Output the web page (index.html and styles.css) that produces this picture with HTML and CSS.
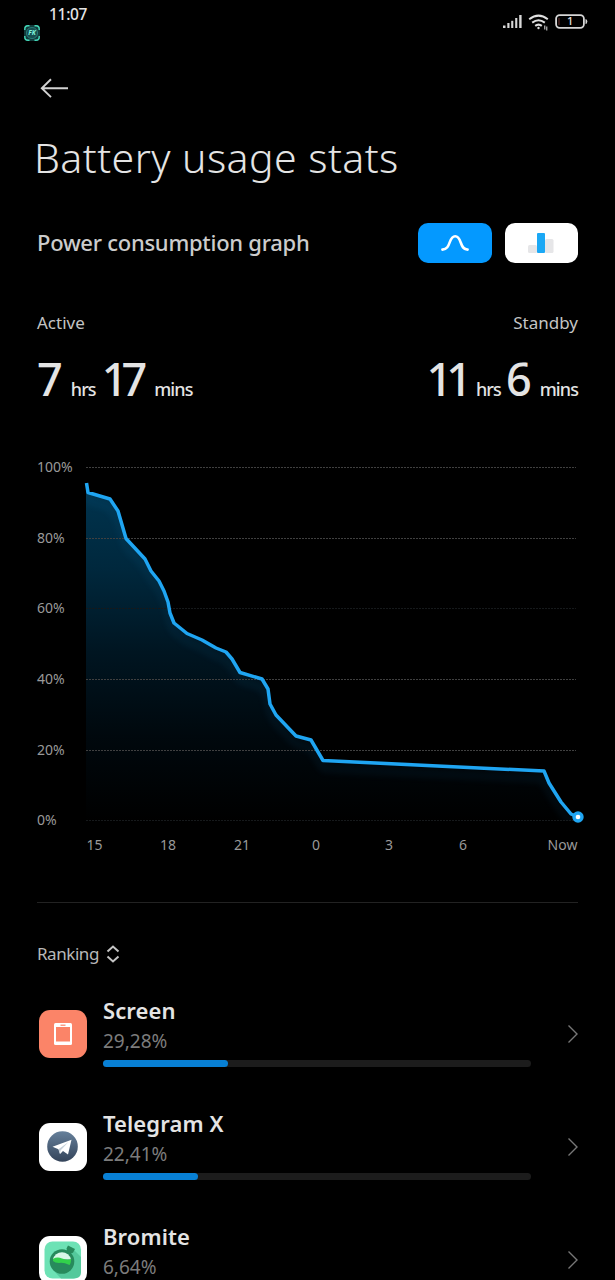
FILE: index.html
```html
<!DOCTYPE html>
<html lang="en">
<head>
<meta charset="UTF-8">
<meta name="viewport" content="width=device-width, initial-scale=1.0">
<title>Battery usage stats</title>
<link rel="stylesheet" href="styles.css">
</head>
<body>
<div class="status-bar">
  <svg class="app-badge" width="18" height="18" viewBox="0 0 18 18">
    <rect x="1" y="1" width="16" height="16" rx="4" fill="#123c3c"/>
    <path d="M1.800 6V5Q1.800 1.800 5 1.800H6.500M11.500 1.800H13Q16.200 1.800 16.200 5V6M16.200 12V13Q16.200 16.200 13 16.200H11.500M6.500 16.200H5Q1.800 16.200 1.800 13V12" fill="none" stroke="#45d8b8" stroke-width="1.400"/>
    <circle cx="9" cy="9" r="5.6" fill="#174f50" stroke="#2c8580" stroke-width=".8"/>
    <text x="9" y="11.2" text-anchor="middle" class="badge-text">FK</text>
  </svg>
  <span class="time">11:07</span>
  <div class="status-icons">
    <svg width="20" height="16" viewBox="0 0 20 16" fill="#d8d8d8">
      <rect x="0" y="11.5" width="2.5" height="2.5"/>
      <rect x="4.3" y="9" width="2.2" height="5"/>
      <rect x="8.2" y="6.8" width="2.1" height="7.2"/>
      <rect x="12.2" y="4" width="2.1" height="10"/>
      <rect x="16.2" y="1" width="2.4" height="13"/>
    </svg>
    <svg width="22" height="17" viewBox="0 0 22 17" fill="none" stroke="#e0e0e0" stroke-width="2">
      <path d="M1.2 5.2Q10.5 -2 19.8 5.2"/>
      <path d="M4.2 8.6Q10.5 3.8 16.8 8.6"/>
      <path d="M7.2 11.9Q10.5 9.3 13.8 11.9"/>
      <circle cx="10.5" cy="14" r="1.2" fill="#e0e0e0" stroke="none"/>
      <path d="M16.8 11.5v4M18.8 12.5v4" stroke-width="1"/>
    </svg>
    <svg width="34" height="16" viewBox="0 0 34 16">
      <rect x="1.1" y="1.1" width="27.8" height="12.8" rx="3.6" fill="none" stroke="#d6d6d6" stroke-width="1.8"/>
      <rect x="3.5" y="4" width="1" height="7" fill="#6b302c"/>
      <path d="M30.5 5v5q1.8 0 1.8-2.5T30.5 5z" fill="#d6d6d6"/>
      <text x="15.2" y="11.4" text-anchor="middle" class="battery-text">1</text>
    </svg>
  </div>
</div>

<div class="nav">
  <svg width="30" height="22" viewBox="0 0 30 22" fill="none" stroke="#d2d2d2" stroke-width="1.9">
    <path d="M28 11.2H1.8M11 2.3L1.8 11.2L11 20.1"/>
  </svg>
</div>

<h1 class="title">Battery usage stats</h1>

<div class="graph-header">
  <h2>Power consumption graph</h2>
  <div class="toggle">
    <button class="toggle-btn active">
      <svg width="30" height="20" viewBox="0 0 30 20" fill="none" stroke="#fff" stroke-width="2.6" stroke-linecap="round">
        <path d="M2.4 16.6C11.2 16.6 8.2 3.3 15.2 3.3S19.2 16.6 27.6 16.6"/>
      </svg>
    </button>
    <button class="toggle-btn">
      <svg width="28" height="22" viewBox="0 0 28 22">
        <rect x="1" y="13" width="9" height="8" rx="1.5" fill="#e6e6e8"/>
        <rect x="18" y="7" width="8.5" height="14" rx="1.5" fill="#e6e6e8"/>
        <rect x="10" y="1" width="8" height="20" rx="1" fill="#1ba8f5"/>
      </svg>
    </button>
  </div>
</div>

<div class="usage">
  <div class="usage-col">
    <div class="usage-label">Active</div>
    <div class="usage-value"><b>7</b><span class="hrs">hrs</span><b>17</b><span class="mins">mins</span></div>
  </div>
  <div class="usage-col right">
    <div class="usage-label">Standby</div>
    <div class="usage-value"><b>11</b><span class="hrs">hrs</span><b>6</b><span class="mins">mins</span></div>
  </div>
</div>

<svg class="chart" width="615" height="430" viewBox="0 440 615 430">
  <defs>
    <linearGradient id="fill" x1="0" y1="484" x2="0" y2="821" gradientUnits="userSpaceOnUse">
      <stop offset="0" stop-color="#00344f"/>
      <stop offset=".25" stop-color="#00283d"/>
      <stop offset=".5" stop-color="#001521"/>
      <stop offset=".75" stop-color="#00080d"/>
      <stop offset="1" stop-color="#000"/>
    </linearGradient>
    <clipPath id="area">
      <path d="M86 484L88 492.500L110 499L118 511L126 538.500L145 559L151 571L159 581L164 591L168 602L170 613L174 623L187 633.500L202 640L216 648L226 652L232 659L240 672.500L262 679L268 689L270 704L276 715L296 736L311 740L323 760.500L544 771L549 783L561 802L571 814L578 817L578 821H86z"/>
    </clipPath>
    <filter id="soft" x="-10%" y="-10%" width="120%" height="130%">
      <feGaussianBlur stdDeviation="4"/>
    </filter>
  </defs>
  <rect x="86" y="480" width="492" height="341" fill="url(#fill)" clip-path="url(#area)"/>
  <g clip-path="url(#area)">
    <use href="#line" class="glow" transform="translate(0 8)" filter="url(#soft)"/>
  </g>
  <g class="grid">
    <path d="M86 467.500H576"/>
    <path d="M86 538.500H576"/>
    <path d="M86 608.500H576" class="dim"/>
    <path d="M86 679.500H576"/>
    <path d="M86 750.500H576"/>
    <path d="M86 820.500H576" class="dim"/>
  </g>
  <path id="line" d="M86.500 483L88 492.500L110 499L118 511L126 538.500L145 559L151 571L159 581L164 591L168 602L170 613L174 623L187 633.500L202 640L216 648L226 652L232 659L240 672.500L262 679L268 689L270 704L276 715L296 736L311 740L323 760.500L544 771L549 783L561 802L571 814L578 817" fill="none" stroke="#1fa5f2" stroke-width="3.500" stroke-linejoin="round"/>
  <circle cx="578" cy="817" r="5.700" fill="#1fa5f2"/>
  <circle cx="578" cy="817" r="2.300" fill="#fff"/>
  <g class="axis">
    <text x="37" y="472">100%</text>
    <text x="37" y="543">80%</text>
    <text x="37" y="613">60%</text>
    <text x="37" y="684">40%</text>
    <text x="37" y="755">20%</text>
    <text x="37" y="825">0%</text>
  </g>
  <g class="axis hours">
    <text x="94.500" y="850">15</text>
    <text x="168" y="850">18</text>
    <text x="242" y="850">21</text>
    <text x="316" y="850">0</text>
    <text x="389" y="850">3</text>
    <text x="463" y="850">6</text>
    <text x="562.500" y="850">Now</text>
  </g>
</svg>

<div class="ranking-header">
  <span>Ranking</span>
  <svg width="14" height="18" viewBox="0 0 14 18" fill="none" stroke="#c4c4c4" stroke-width="2">
    <path d="M1.500 6.500L7 1.500L12.500 6.500M1.500 11.500L7 16.500L12.500 11.500"/>
  </svg>
</div>

<div class="ranking">
  <div class="item">
    <svg class="app-icon" width="48" height="48" viewBox="0 0 48 48">
      <rect width="48" height="48" rx="11" fill="#fb8468"/>
      <rect x="15" y="13" width="18" height="22" rx="1.500" fill="#fff"/>
      <rect x="17" y="17" width="14" height="14.500" fill="#fb8468"/>
      <path d="M21.500 15.200h5" stroke="#fb8468" stroke-width="1.200"/>
    </svg>
    <div class="info">
      <div class="name">Screen</div>
      <div class="percent">29,28%</div>
      <div class="bar"><div class="bar-fill" style="width: 29.28%"></div></div>
    </div>
    <svg class="chevron" width="12" height="20" viewBox="0 0 12 20"><path d="M1.500 1.500L10 10L1.500 18.500"/></svg>
  </div>
  <div class="item">
    <svg class="app-icon" width="48" height="48" viewBox="0 0 48 48">
      <defs>
        <linearGradient id="tg" x1="0" y1="0" x2="0" y2="1">
          <stop offset="0" stop-color="#66809b"/>
          <stop offset="1" stop-color="#34445a"/>
        </linearGradient>
      </defs>
      <rect width="48" height="48" rx="11" fill="#fff"/>
      <circle cx="23.500" cy="23.500" r="15.300" fill="url(#tg)"/>
      <path d="M13.500 23.800L32.500 16.800L29 31.500L24 28L21 31L19.500 26.200z" fill="#fff"/>
      <path d="M19.500 26.200L29.500 19L21.500 27.500L21 31z" fill="#c5d0da"/>
    </svg>
    <div class="info">
      <div class="name">Telegram X</div>
      <div class="percent">22,41%</div>
      <div class="bar"><div class="bar-fill" style="width: 22.200%"></div></div>
    </div>
    <svg class="chevron" width="12" height="20" viewBox="0 0 12 20"><path d="M1.500 1.500L10 10L1.500 18.500"/></svg>
  </div>
  <div class="item">
    <svg class="app-icon" width="48" height="48" viewBox="0 0 48 48">
      <rect width="48" height="48" rx="11" fill="#fff"/>
      <rect x="5.500" y="5.500" width="36.500" height="37" rx="8" fill="#6de2b5"/>
      <path d="M34 13L42 21V36Q42 42.500 35 42.500H22L15 35z" fill="#54c99c"/>
      <path d="M27.500 12.500L29 9.500L36 13L34 16.800L31.500 17.500L28 15z" fill="#278a5c"/>
      <circle cx="23" cy="25.500" r="12.300" fill="#278a5c"/>
      <path d="M14 23.500A9.200 9.200 0 0 1 32 23.500z" fill="#d9f7e8"/>
      <path d="M14 23Q18 20.500 23 22.500T32.200 23Q32 27 30.500 29Q24 26 20 27Q16 27 14 25z" fill="#32d14b"/>
    </svg>
    <div class="info">
      <div class="name">Bromite</div>
      <div class="percent">6,64%</div>
      <div class="bar"><div class="bar-fill" style="width: 6.64%"></div></div>
    </div>
    <svg class="chevron" width="12" height="20" viewBox="0 0 12 20"><path d="M1.500 1.500L10 10L1.500 18.500"/></svg>
  </div>
</div>
</body>
</html>
```

FILE: styles.css
```css
* {
  box-sizing: border-box;
}

body {
  margin: 0;
  height: 1280px;
  overflow: hidden;
  background-color: #000;
  color: #e4e4e4;
  font-family: "Noto Sans", sans-serif;
}

svg {
  display: block;
  flex: none;
}

.status-bar {
  display: flex;
  align-items: flex-start;
  height: 64px;
  padding: 0 26px 0 23px;
}

.app-badge {
  margin-top: 24px;
}

.badge-text {
  font-size: 6.5px;
  font-weight: 700;
  font-style: italic;
  fill: #7ff5dd;
}

.time {
  margin: 4px 0 0 8px;
  font-size: 15.5px;
  font-weight: 500;
  line-height: 20px;
  letter-spacing: -0.3px;
}

.status-icons {
  display: flex;
  gap: 5px;
  margin: 14px 0 0 auto;
}

.battery-text {
  font-size: 11px;
  font-weight: 500;
  fill: #e4e4e4;
}

.nav {
  height: 66px;
  padding: 13px 40px 0;
}

.title {
  margin: 0;
  height: 84px;
  padding-left: 34px;
  font-size: 41px;
  font-weight: 300;
  line-height: 54px;
  letter-spacing: 0.45px;
}

.graph-header {
  display: flex;
  align-items: center;
  justify-content: space-between;
  height: 58px;
  padding: 0 37px;
}

.graph-header h2 {
  margin: -2px 0 0;
  font-size: 22px;
  font-weight: 500;
  letter-spacing: -0.27px;
  color: #ccc;
}

.toggle {
  display: flex;
  gap: 13px;
}

.toggle-btn {
  display: flex;
  align-items: center;
  justify-content: center;
  width: 73.5px;
  height: 40px;
  padding: 0;
  border: 0;
  border-radius: 10px;
  background-color: #fff;
}

.toggle-btn.active {
  background-color: #0499ff;
}

.usage {
  display: flex;
  justify-content: space-between;
  height: 168px;
  padding: 39px 37px 0;
}

.usage-label {
  font-size: 17px;
  line-height: 24px;
  color: #c4c4c4;
}

.usage-value {
  display: flex;
  align-items: baseline;
  margin-top: 14px;
  line-height: 60px;
}

.usage-value b {
  font-size: 45px;
  font-weight: 500;
  letter-spacing: -6px;
}

.usage-value span {
  font-size: 18px;
  font-weight: 500;
  letter-spacing: -0.9px;
}

.usage-value .hrs {
  margin: 0 6px 0 14px;
}

.usage-value .mins {
  margin-left: 13px;
}

.right {
  text-align: right;
}

.right .usage-value {
  justify-content: flex-end;
}

.right .usage-value .hrs {
  margin: 0 5px 0 10px;
}

.right .usage-value .mins {
  margin-left: 14px;
}

.grid path {
  stroke: #404040;
  stroke-dasharray: 2 1;
}

.grid .dim {
  stroke: #16191b;
}

.glow {
  opacity: .15;
}

.axis text {
  font-size: 14px;
  fill: #999;
}

.hours text {
  text-anchor: middle;
}

.ranking-header {
  display: flex;
  align-items: center;
  gap: 7px;
  height: 84px;
  margin: 32px 37px 0;
  padding-top: 19px;
  border-top: 1px solid #222;
  font-size: 17px;
  letter-spacing: -0.45px;
  color: #b8b8b8;
}

.ranking-header span {
  margin-top: -2px;
}

.ranking {
  padding: 9px 36px 0 38.5px;
}

.item {
  display: flex;
  height: 113px;
}

.app-icon {
  margin-top: 14.5px;
}

.info {
  width: 428px;
  margin-left: 16.5px;
}

.name {
  font-size: 22px;
  font-weight: 600;
  line-height: 30px;
  letter-spacing: 0.1px;
}

.percent {
  margin-top: 1px;
  font-size: 19px;
  line-height: 30px;
  color: #7c7c7c;
}

.bar {
  height: 7px;
  margin-top: 4px;
  border-radius: 4px;
  background-color: #1c1c1c;
}

.bar-fill {
  height: 100%;
  border-radius: 4px;
  background-color: #0880d5;
}

.chevron {
  margin: 29px 0 0 auto;
  fill: none;
  stroke: #777;
  stroke-width: 1.4;
}
```
